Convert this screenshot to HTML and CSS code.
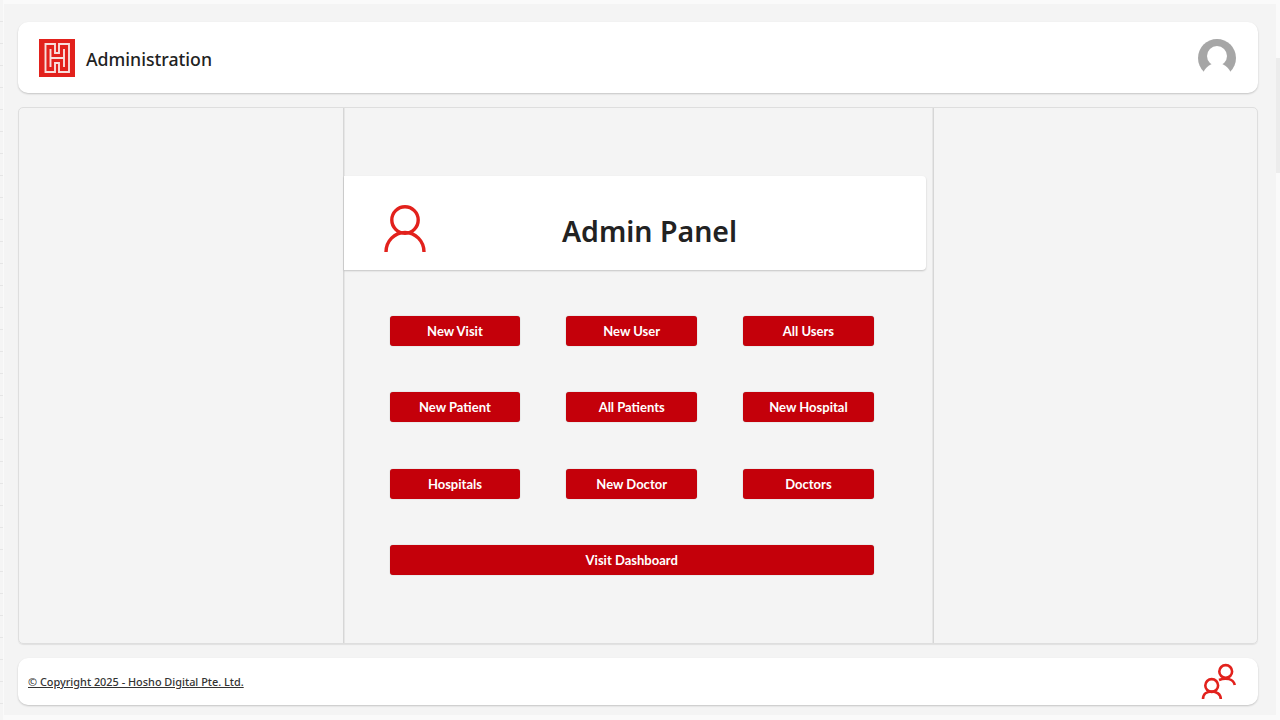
FILE: index.html
```html
<!DOCTYPE html>
<html lang="en">
<head>
<meta charset="utf-8">
<title>Administration</title>
<link rel="stylesheet" href="styles.css">
</head>
<body>
<div class="edge-ticks"></div>
<div class="edge-scroll"></div>
<div class="shell">
  <header class="card topbar">
    <div class="brand">
      <svg class="logo" viewBox="0 0 36 38" aria-hidden="true">
        <rect width="36" height="38" fill="#e2211c"/>
        <path d="M6.500 5H16V14H20V5H30V33H20V24H16V33H6.500Z M11.500 10V28 M25 10V28 M11.500 19H25" fill="none" stroke="#f8dedc" stroke-width="1.900"/>
      </svg>
      <span class="brand-name">Administration</span>
    </div>
    <svg class="avatar" viewBox="0 0 38 38" aria-hidden="true">
      <circle cx="19" cy="19" r="19" fill="#a6a6a6"/>
      <circle cx="19" cy="17" r="10" fill="#fff"/>
      <ellipse cx="19" cy="40" rx="15" ry="16" fill="#fff"/>
    </svg>
  </header>

  <main class="panel">
    <div class="side"></div>
    <section class="center">
      <div class="banner">
        <svg class="person" viewBox="0 0 42 48" aria-hidden="true">
          <circle cx="21" cy="15" r="13.200" fill="none" stroke="#e2211c" stroke-width="3.400"/>
          <path d="M2 47C2 36 10.500 27.500 21 27.500S40 36 40 47" fill="none" stroke="#e2211c" stroke-width="3.400"/>
        </svg>
        <h1 class="title">Admin Panel</h1>
      </div>
      <nav class="actions">
        <a class="btn">New Visit</a>
        <a class="btn">New User</a>
        <a class="btn">All Users</a>
        <a class="btn">New Patient</a>
        <a class="btn">All Patients</a>
        <a class="btn">New Hospital</a>
        <a class="btn">Hospitals</a>
        <a class="btn">New Doctor</a>
        <a class="btn">Doctors</a>
        <a class="btn wide">Visit Dashboard</a>
      </nav>
    </section>
    <div class="side"></div>
  </main>

  <footer class="card bottombar">
    <a class="copyright">© Copyright 2025 - Hosho Digital Pte. Ltd.</a>
    <svg class="people" viewBox="0 0 36 36" aria-hidden="true">
      <g fill="none" stroke="#e2211c" stroke-width="2.600">
        <circle cx="25.700" cy="7.500" r="6.400"/>
        <path d="M19 16C26 13 33.500 15 34.800 21"/>
        <circle cx="11.700" cy="21.500" r="6.400"/>
        <path d="M3 35C3 30 7 27.500 11.700 27.500S20.800 30 20.800 35"/>
      </g>
    </svg>
  </footer>
</div>
</body>
</html>
```
FILE: styles.css
```css
* { box-sizing: border-box; }
html, body { height: 100%; }
body {
  margin: 0;
  background: #fafafa;
  font-family: "Noto Sans", "Open Sans", sans-serif;
  color: #222;
  overflow: hidden;
}
.edge-ticks {
  position: absolute;
  left: 0; top: 0; bottom: 0;
  width: 3px;
  background: repeating-linear-gradient(#f5f5f5 0 21px, #e6e6e6 21px 22px);
}
.edge-scroll {
  position: absolute;
  right: 0; top: 58px;
  width: 4px; height: 115px;
  background: #ececec;
}
.shell {
  height: 711px;
  margin: 4px 4px 0;
  padding: 18px 18px 10px 14px;
  background: #f4f4f4;
  display: flex;
  flex-direction: column;
  gap: 14px;
}
.card {
  background: #fff;
  border-radius: 10px;
  box-shadow: 0 1px 2px rgba(0,0,0,.2);
  display: flex;
  align-items: center;
  justify-content: space-between;
}
.topbar { height: 71px; padding: 0 22px 0 21px; }
.brand { display: flex; align-items: center; gap: 11px; }
.logo { width: 36px; height: 38px; display: block; }
.brand-name { font-size: 17.700px; font-weight: 500; color: #222; padding-top: 2px; }
.avatar { width: 38px; height: 38px; display: block; }
.panel {
  height: 537px;
  display: grid;
  grid-template-columns: 324px 591px 1fr;
  border: 1px solid #dedede;
  border-radius: 5px;
  box-shadow: 0 1px 1px rgba(0,0,0,.08);
}
.center {
  border-left: 1px solid #d6d6d6;
  border-right: 1px solid #d6d6d6;
  box-shadow: inset 1px 0 0 #e6e6e6, inset -1px 0 0 #e6e6e6;
  padding: 68px 7px 0 0;
}
.banner {
  height: 94px;
  background: #fff;
  border-radius: 0 4px 4px 0;
  box-shadow: 0 1px 2px rgba(0,0,0,.2);
  display: flex;
  align-items: center;
  padding-left: 40px;
}
.person { width: 42px; height: 48px; display: block; margin-top: 12px; }
.title {
  flex: 1;
  margin: 0;
  padding: 15px 53px 0 0;
  text-align: center;
  font-size: 28.500px;
  font-weight: 600;
  color: #222;
}
.actions {
  display: grid;
  grid-template-columns: repeat(3, 1fr);
  gap: 46.330px;
  width: 484px;
  margin: 46px 0 0 45.700px;
}
.btn {
  height: 30px;
  background: #c4000a;
  border-radius: 3px;
  box-shadow: 0 0 1px rgba(0,0,0,.4);
  color: #fff;
  font-family: Lato, sans-serif;
  font-size: 13px;
  font-weight: 700;
  display: flex;
  align-items: center;
  justify-content: center;
}
.wide { grid-column: 1 / -1; }
.bottombar { height: 47px; padding: 0 22px 0 10px; }
.copyright {
  font-size: 10.900px;
  font-weight: 500;
  color: #333;
  text-decoration: underline;
}
.people { width: 36px; height: 36px; display: block; overflow: visible; }
```
